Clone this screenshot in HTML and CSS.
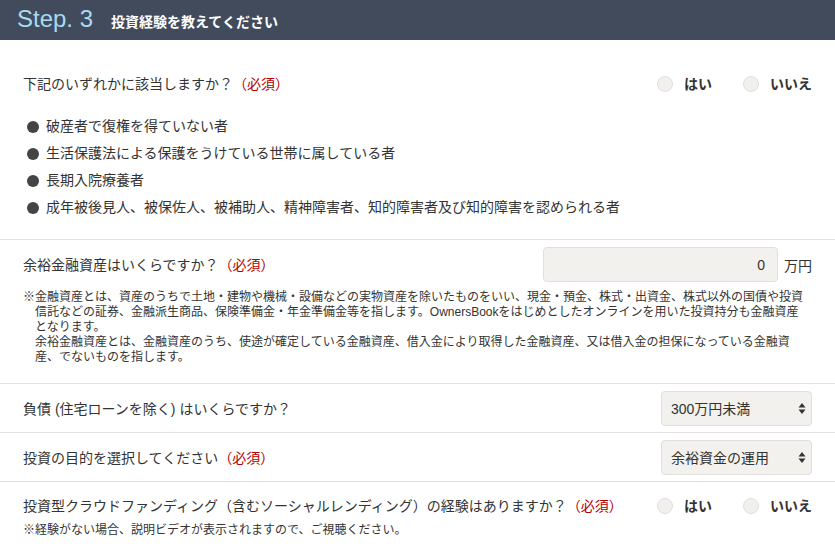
FILE: index.html
```html
<!DOCTYPE html>
<html lang="ja">
<head>
    <meta charset="UTF-8" />
    <meta name="viewport" content="width=device-width, initial-scale=1.0"/>
    <title>投資経験を教えてください</title>
    <link rel="stylesheet" href="styles.css">
</head>
<body>
    <header class="step-header">
        <span class="step-no">Step. 3</span>
        <h1 class="step-title">投資経験を教えてください</h1>
    </header>

    <main class="form">
        <!-- 該当確認 -->
        <section class="form-row first-row">
            <div class="row-main">
                <p class="question">下記のいずれかに該当しますか？<span class="req">（必須）</span></p>
                <div class="radio-group">
                    <label class="radio"><input type="radio" name="applicable" value="yes"><span class="dot"></span>はい</label>
                    <label class="radio"><input type="radio" name="applicable" value="no"><span class="dot"></span>いいえ</label>
                </div>
            </div>
            <ul class="conditions">
                <li>破産者で復権を得ていない者</li>
                <li>生活保護法による保護をうけている世帯に属している者</li>
                <li>長期入院療養者</li>
                <li>成年被後見人、被保佐人、被補助人、精神障害者、知的障害者及び知的障害を認められる者</li>
            </ul>
        </section>

        <!-- 余裕金融資産 -->
        <section class="form-row asset-row">
            <div class="row-main">
                <p class="question">余裕金融資産はいくらですか？<span class="req">（必須）</span></p>
                <div class="amount">
                    <input type="text" class="amount-input" value="0">
                    <span class="unit">万円</span>
                </div>
            </div>
            <div class="note">
                <p class="note-first">※金融資産とは、資産のうちで土地・建物や機械・設備などの実物資産を除いたものをいい、現金・預金、株式・出資金、株式以外の国債や投資信託などの証券、金融派生商品、保険準備金・年金準備金等を指します。OwnersBookをはじめとしたオンラインを用いた投資持分も金融資産となります。</p>
                <p class="note-sub">余裕金融資産とは、金融資産のうち、使途が確定している金融資産、借入金により取得した金融資産、又は借入金の担保になっている金融資産、でないものを指します。</p>
            </div>
        </section>

        <!-- 負債 -->
        <section class="form-row select-row">
            <div class="row-main">
                <p class="question">負債 (住宅ローンを除く) はいくらですか？</p>
                <div class="select-wrap">
                    <select class="select">
                        <option>300万円未満</option>
                        <option>300万円以上</option>
                    </select>
                    <svg class="select-arrow" width="8" height="13" viewBox="0 0 8 13"><path d="M4 1 L7.5 5.5 H0.5 Z M4 12 L7.5 7.5 H0.5 Z" fill="#333"/></svg>
                </div>
            </div>
        </section>

        <!-- 投資の目的 -->
        <section class="form-row select-row">
            <div class="row-main">
                <p class="question">投資の目的を選択してください<span class="req">（必須）</span></p>
                <div class="select-wrap">
                    <select class="select">
                        <option>余裕資金の運用</option>
                        <option>資産の形成</option>
                    </select>
                    <svg class="select-arrow" width="8" height="13" viewBox="0 0 8 13"><path d="M4 1 L7.5 5.5 H0.5 Z M4 12 L7.5 7.5 H0.5 Z" fill="#333"/></svg>
                </div>
            </div>
        </section>

        <!-- クラウドファンディング経験 -->
        <section class="form-row last-row">
            <div class="row-main">
                <p class="question">投資型クラウドファンディング（含むソーシャルレンディング）の経験はありますか？<span class="req">（必須）</span></p>
                <div class="radio-group">
                    <label class="radio"><input type="radio" name="crowdfunding" value="yes"><span class="dot"></span>はい</label>
                    <label class="radio"><input type="radio" name="crowdfunding" value="no"><span class="dot"></span>いいえ</label>
                </div>
            </div>
            <p class="video-note">※経験がない場合、説明ビデオが表示されますので、ご視聴ください。</p>
        </section>
    </main>
</body>
</html>
```

FILE: styles.css
```css
body {
    margin: 0;
    padding: 0;
    background: #fff;
    color: #333;
    font-family: "Liberation Sans", "Noto Sans CJK JP", sans-serif;
    font-size: 14px;
}

p {
    margin: 0;
}

.step-header {
    display: flex;
    align-items: baseline;
    height: 40px;
    box-sizing: border-box;
    padding: 4px 0 0 17px;
    background: #424b5b;
}

.step-no {
    color: #a6dbf3;
    font-size: 24px;
    line-height: 30px;
    margin-right: 18px;
}

.step-title {
    margin: 0;
    color: #fff;
    font-size: 14px;
    font-weight: bold;
}

.form-row {
    padding: 0 23px;
    border-bottom: 1px solid #e2e2e2;
}

.form-row:last-child {
    border-bottom: none;
}

.row-main {
    display: flex;
    justify-content: space-between;
    align-items: center;
}

.question {
    line-height: 24px;
}

.req {
    color: #b30000;
}

/* radio buttons */
.radio-group {
    display: flex;
    line-height: 24px;
}

.radio {
    display: flex;
    align-items: center;
    font-weight: bold;
}

.radio + .radio {
    margin-left: 31px;
}

.radio input {
    display: none;
}

.dot {
    width: 16px;
    height: 16px;
    box-sizing: border-box;
    border: 1px solid #e0dfdb;
    border-radius: 50%;
    background: #f1f0ed;
    margin-right: 11px;
}

/* first row */
.first-row {
    padding-top: 32px;
    padding-bottom: 18px;
}

.conditions {
    list-style: none;
    margin: 17px 0 0 0;
    padding: 0;
}

.conditions li {
    display: flex;
    align-items: center;
    line-height: 27px;
}

.conditions li::before {
    content: "";
    width: 12px;
    height: 12px;
    border-radius: 50%;
    background: #444;
    margin: 0 7px 0 4px;
}

/* asset row */
.asset-row {
    padding-top: 7px;
    padding-bottom: 18px;
}

.amount {
    display: flex;
    align-items: center;
}

.amount-input {
    width: 235px;
    height: 35px;
    box-sizing: border-box;
    border: 1px solid #e0dfdb;
    border-radius: 4px;
    background: #f2f1ee;
    padding: 0 12px;
    text-align: right;
    font-family: inherit;
    font-size: 14px;
    color: #333;
}

.unit {
    margin-left: 6px;
}

.note {
    margin-top: 8px;
    padding-right: 4px;
    font-size: 12px;
    line-height: 15px;
}

.note-first {
    padding-left: 12px;
    text-indent: -12px;
}

.note-sub {
    padding-left: 12px;
}

/* select rows */
.select-row {
    padding-top: 7px;
    padding-bottom: 6px;
}

.select-wrap {
    position: relative;
}

.select {
    appearance: none;
    -webkit-appearance: none;
    width: 151px;
    height: 35px;
    box-sizing: border-box;
    border: 1px solid #e0dfdb;
    border-radius: 4px;
    background: #f2f1ee;
    padding: 0 24px 0 9px;
    font-family: inherit;
    font-size: 14px;
    color: #333;
}

.select-arrow {
    position: absolute;
    right: 6px;
    top: 11px;
    pointer-events: none;
}

/* last row */
.last-row {
    padding-top: 12px;
}

.video-note {
    font-size: 12px;
    line-height: 24px;
}
```
